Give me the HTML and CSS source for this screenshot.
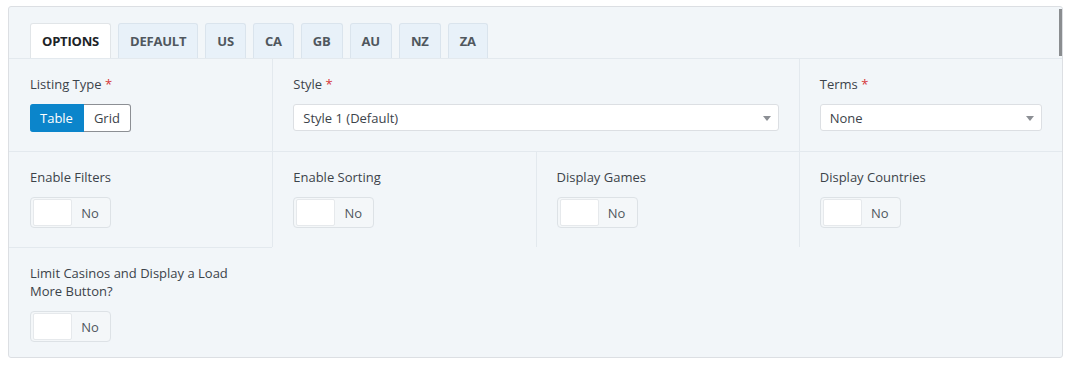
FILE: index.html
```html
<!DOCTYPE html>
<html lang="en">
<head>
    <meta charset="UTF-8">
    <meta name="viewport" content="width=device-width, initial-scale=1.0">
    <title>Casino Listing Options</title>
    <link rel="stylesheet" href="styles.css">
</head>
<body>
    <div class="panel">
        <!-- Scrollbar thumb of the metabox -->
        <div class="scroll-thumb"></div>

        <!-- Tabs -->
        <ul class="tabs">
            <li class="tab active">Options</li>
            <li class="tab">Default</li>
            <li class="tab">US</li>
            <li class="tab">CA</li>
            <li class="tab">GB</li>
            <li class="tab">AU</li>
            <li class="tab">NZ</li>
            <li class="tab">ZA</li>
        </ul>

        <!-- Fields -->
        <div class="fields">
            <div class="field row-start">
                <label class="field-label">Listing Type <span class="req">*</span></label>
                <div class="btn-group">
                    <button class="btn selected">Table</button>
                    <button class="btn">Grid</button>
                </div>
            </div>
            <div class="field span-2">
                <label class="field-label">Style <span class="req">*</span></label>
                <div class="select">Style 1 (Default)</div>
            </div>
            <div class="field">
                <label class="field-label">Terms <span class="req">*</span></label>
                <div class="select">None</div>
            </div>

            <div class="field row-start">
                <label class="field-label">Enable Filters</label>
                <div class="toggle"><span class="knob"></span><span class="toggle-text">No</span></div>
            </div>
            <div class="field">
                <label class="field-label">Enable Sorting</label>
                <div class="toggle"><span class="knob"></span><span class="toggle-text">No</span></div>
            </div>
            <div class="field">
                <label class="field-label">Display Games</label>
                <div class="toggle"><span class="knob"></span><span class="toggle-text">No</span></div>
            </div>
            <div class="field">
                <label class="field-label">Display Countries</label>
                <div class="toggle"><span class="knob"></span><span class="toggle-text">No</span></div>
            </div>

            <div class="field row-start">
                <label class="field-label">Limit Casinos and Display a Load More Button?</label>
                <div class="toggle"><span class="knob"></span><span class="toggle-text">No</span></div>
            </div>
        </div>
    </div>
</body>
</html>
```

FILE: styles.css
```css
body {
    margin: 6px 0 0 8px;
    font-family: "Open Sans", "Noto Sans", sans-serif;
    font-size: 13px;
    color: #3c434a;
    background-color: #ffffff;
}

.panel {
    position: relative;
    width: 1053px;
    height: 350px;
    box-sizing: content-box;
    border: 1px solid #dcdfe3;
    border-radius: 3px;
    background-color: #f2f6f9;
}

.scroll-thumb {
    position: absolute;
    top: 2px;
    right: 0;
    width: 3px;
    height: 47px;
    background-color: #8a8d90;
}

.tabs {
    list-style: none;
    margin: 0;
    padding: 16px 0 0 21px;
    display: flex;
    gap: 7px;
}

.tab {
    height: 34px;
    padding: 0 11px;
    display: flex;
    align-items: center;
    border: 1px solid #dae4ed;
    border-bottom: none;
    border-radius: 3px 3px 0 0;
    background-color: #e8f1f9;
    color: #50575e;
    font-weight: 700;
    text-transform: uppercase;
    letter-spacing: -0.2px;
}

.tab.active {
    background-color: #ffffff;
    border-color: #e1e5e8;
    color: #1d2327;
}

.fields {
    display: grid;
    grid-template-columns: repeat(4, 1fr);
}

.field {
    padding: 16px 20px 19px 20px;
    border-top: 1px solid #e3e9ee;
    border-left: 1px solid #e3e9ee;
}

.field.row-start {
    border-left: none;
    padding-left: 21px;
}

.field.span-2 {
    grid-column: span 2;
}

.field-label {
    display: block;
    line-height: 18px;
    margin-bottom: 11px;
    color: #3c434a;
}

.req {
    color: #d63638;
}

.btn-group {
    display: flex;
}

.btn {
    height: 28px;
    padding: 0 10px;
    font-family: inherit;
    font-size: 13px;
    border: 1px solid #8c8f94;
    background-color: #ffffff;
    color: #3c434a;
    border-radius: 0 3px 3px 0;
    border-left: none;
}

.btn.selected {
    background-color: #0b85cb;
    border-color: #0b85cb;
    color: #ffffff;
    border-radius: 3px 0 0 3px;
    padding: 0 10px;
}

.select {
    height: 27px;
    box-sizing: border-box;
    padding: 0 9px;
    display: flex;
    align-items: center;
    background-color: #ffffff;
    border: 1px solid #dcdfe3;
    border-radius: 3px;
    position: relative;
    color: #3c434a;
}

.select::after {
    content: "";
    position: absolute;
    right: 7px;
    top: 11px;
    border-left: 4px solid transparent;
    border-right: 4px solid transparent;
    border-top: 5px solid #8c8f94;
}

.toggle {
    width: 81px;
    height: 31px;
    box-sizing: border-box;
    display: flex;
    align-items: center;
    padding: 2px;
    border: 1px solid #dde2e6;
    border-radius: 4px;
    background-color: #f4f7f9;
}

.knob {
    width: 37px;
    height: 25px;
    background-color: #ffffff;
    border: 1px solid #e6e9ec;
    border-radius: 2px;
}

.toggle-text {
    flex: 1;
    text-align: center;
    color: #50575e;
}
```
